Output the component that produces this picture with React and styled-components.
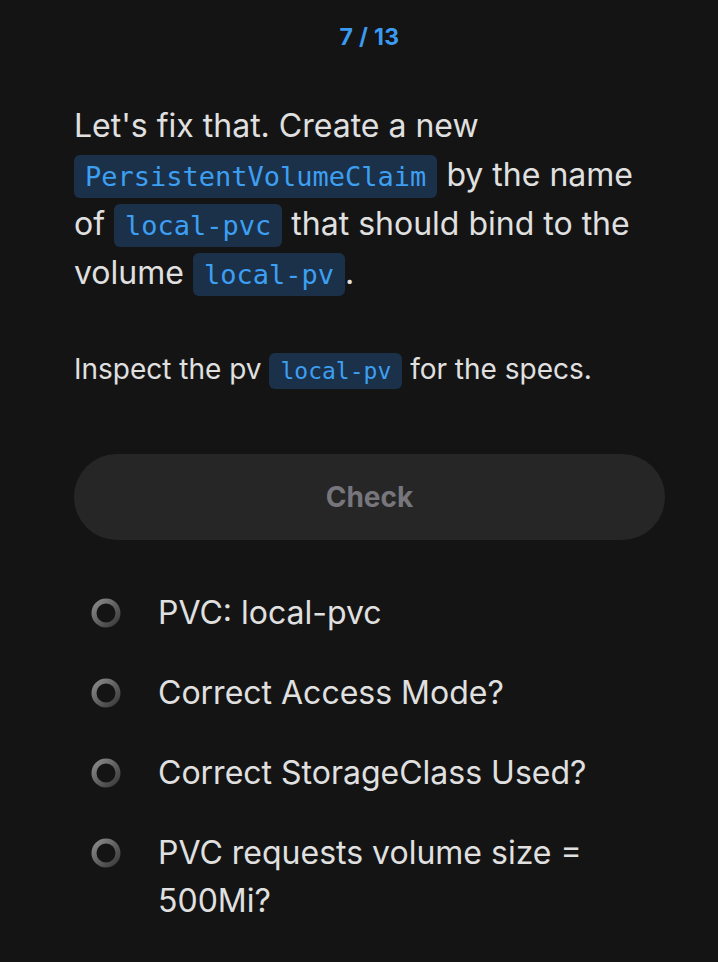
import styled, { createGlobalStyle } from "styled-components";

const Global = createGlobalStyle`
  html, body {
    margin: 0;
    padding: 0;
    background: #141414;
  }
  body {
    font-family: Inter, "Liberation Sans", sans-serif;
    color: #dedede;
  }
`

const Page = styled.div`
  width: 718px;
  min-height: 962px;
  background: #141414;
  padding: 22px 53px 40px 74px;
  box-sizing: border-box;
`
const Counter = styled.div`
  text-align: center;
  color: #3a9bf0;
  font-weight: 700;
  font-size: 23px;
  line-height: 30px;
  letter-spacing: 0.3px;
`
const Lead = styled.p`
  margin: 49px 0 0;
  font-size: 32px;
  line-height: 49px;
  color: #e0e0e0;
`
const Note = styled.p`
  margin: 52px 0 0;
  font-size: 28px;
  line-height: 40px;
  color: #e0e0e0;
`
const Code = styled.code`
  font-family: "DejaVu Sans Mono", "Liberation Mono", monospace;
  font-size: ${p => p.$size};
  line-height: 1;
  color: #3d9ff2;
  background: #1b3149;
  border-radius: 6px;
  padding: ${p => p.$pad};
`
const CheckButton = styled.button`
  display: block;
  width: 100%;
  height: 86px;
  margin-top: 65px;
  border: none;
  border-radius: 43px;
  background: #262626;
  color: #76767c;
  font-family: Inter, "Liberation Sans", sans-serif;
  font-weight: 700;
  font-size: 28px;
`
const List = styled.ul`
  list-style: none;
  margin: 49px 0 0;
  padding: 0 0 0 16px;
  display: flex;
  flex-direction: column;
  gap: 32px;
`
const Item = styled.li`
  display: flex;
  align-items: flex-start;
  gap: 36px;
  font-size: 32px;
  line-height: 48px;
  color: #e0e0e0;
`
const Ring = styled.svg`
  flex: none;
  margin-top: 8px;
`

function Status() {
  return (
    <Ring width="32" height="32" viewBox="0 0 32 32">
      <defs>
        <linearGradient id="rg" x1="0" y1="0" x2="1" y2="1">
          <stop offset="0" stopColor="#8a8a8a" />
          <stop offset="1" stopColor="#3a3a3a" />
        </linearGradient>
      </defs>
      <circle cx="16" cy="16" r="12" fill="none" stroke="url(#rg)" strokeWidth="5" />
    </Ring>
  )
}

const checks = [
  "PVC: local-pvc",
  "Correct Access Mode?",
  "Correct StorageClass Used?",
  "PVC requests volume size = 500Mi?",
]

export default function App() {
  return (
    <Page>
      <Global />
      <Counter>7 / 13</Counter>
      <Lead>
        Let's fix that. Create a new <Code $size="27px" $pad="6px 11px">PersistentVolumeClaim</Code> by the name
        of <Code $size="27px" $pad="6px 11px">local-pvc</Code> that should bind to the
        volume <Code $size="27px" $pad="6px 11px">local-pv</Code>.
      </Lead>
      <Note>
        Inspect the pv <Code $size="23px" $pad="5px 11px">local-pv</Code> for the specs.
      </Note>
      <CheckButton>Check</CheckButton>
      <List>
        {checks.map(c => (
          <Item key={c}>
            <Status />
            <span>{c}</span>
          </Item>
        ))}
      </List>
    </Page>
  )
}
